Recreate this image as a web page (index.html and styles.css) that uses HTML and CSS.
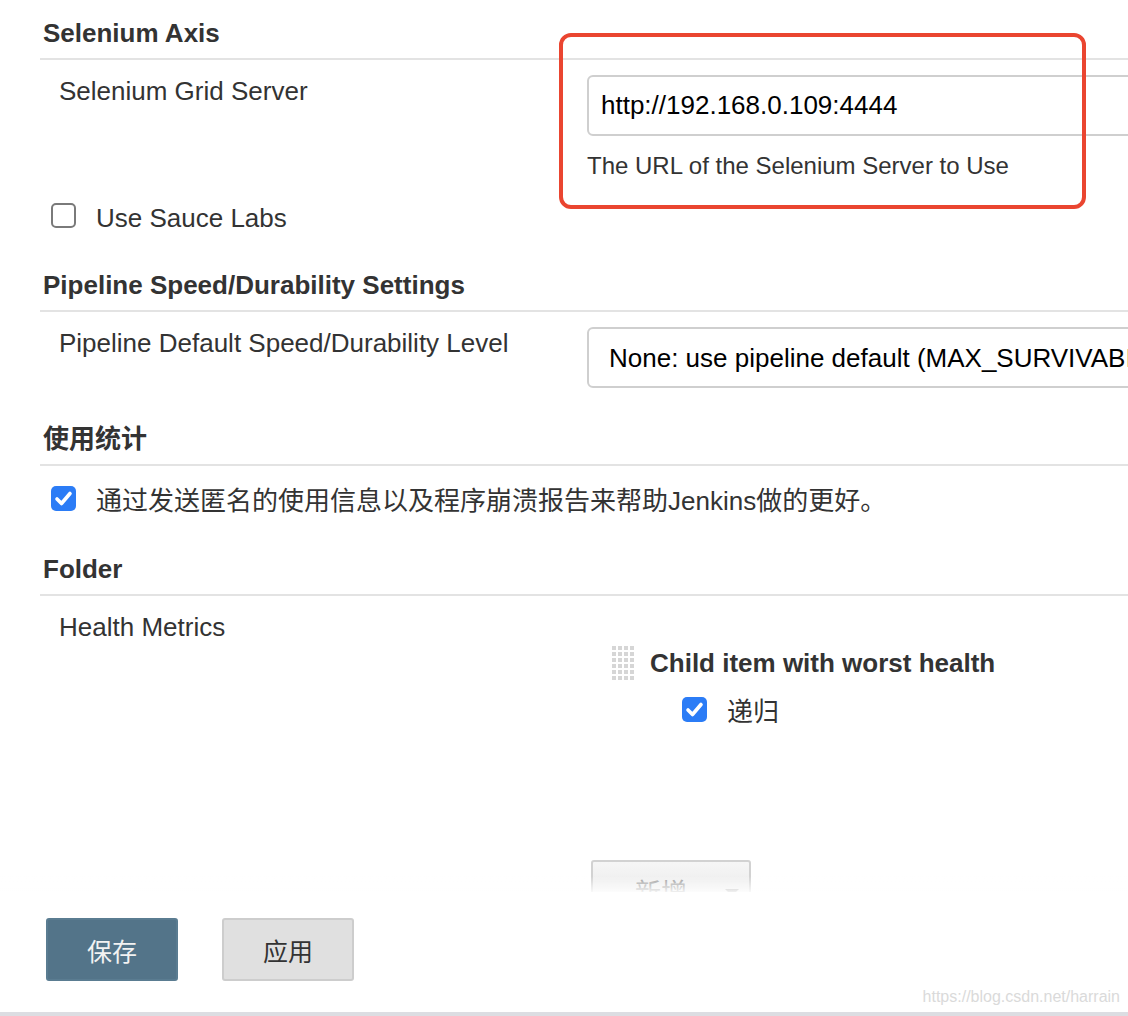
FILE: index.html
```html
<!DOCTYPE html>
<html lang="zh-CN">
<head>
<meta charset="utf-8">
<title>Jenkins 配置</title>
<link rel="stylesheet" href="styles.css">
</head>
<body>
<div class="main">
  <section class="section">
    <h3 class="section-header">Selenium Axis</h3>
    <div class="row">
      <div class="label">Selenium Grid Server</div>
      <div class="field">
        <input class="text-input" type="text" value="http://192.168.0.109:4444">
        <div class="help">The URL of the Selenium Server to Use</div>
        <div class="annotation"></div>
      </div>
    </div>
    <div class="check-row check-row--first">
      <span class="cb"></span>
      <span>Use Sauce Labs</span>
    </div>
  </section>

  <section class="section section--s2">
    <h3 class="section-header">Pipeline Speed/Durability Settings</h3>
    <div class="row">
      <div class="label">Pipeline Default Speed/Durability Level</div>
      <div class="field">
        <select class="select"><option>None: use pipeline default (MAX_SURVIVABILITY)</option></select>
      </div>
    </div>
  </section>

  <section class="section section--s3">
    <h3 class="section-header">使用统计</h3>
    <div class="check-row check-row--stats">
      <span class="cb cb--on"><svg viewBox="0 0 25 25" width="25" height="25"><path d="M6 13 L10.5 17.5 L19 7.5" fill="none" stroke="#fff" stroke-width="3.6" stroke-linecap="round" stroke-linejoin="round"/></svg></span>
      <span>通过发送匿名的使用信息以及程序崩溃报告来帮助Jenkins做的更好。</span>
    </div>
  </section>

  <section class="section section--s4">
    <h3 class="section-header">Folder</h3>
    <div class="row">
      <div class="label">Health Metrics</div>
      <div class="field">
        <div class="repeat-item">
          <svg class="handle" viewBox="0 0 22 36" width="22" height="36">
            <g fill="#d6d6d6">
              <rect x="0" y="0" width="4" height="4"/><rect x="6" y="0" width="4" height="4"/><rect x="12" y="0" width="4" height="4"/><rect x="18" y="0" width="4" height="4"/>
              <rect x="0" y="6" width="4" height="4"/><rect x="6" y="6" width="4" height="4"/><rect x="12" y="6" width="4" height="4"/><rect x="18" y="6" width="4" height="4"/>
              <rect x="0" y="12" width="4" height="4"/><rect x="6" y="12" width="4" height="4"/><rect x="12" y="12" width="4" height="4"/><rect x="18" y="12" width="4" height="4"/>
              <rect x="0" y="18" width="4" height="4"/><rect x="6" y="18" width="4" height="4"/><rect x="12" y="18" width="4" height="4"/><rect x="18" y="18" width="4" height="4"/>
              <rect x="0" y="24" width="4" height="4"/><rect x="6" y="24" width="4" height="4"/><rect x="12" y="24" width="4" height="4"/><rect x="18" y="24" width="4" height="4"/>
              <rect x="0" y="30" width="4" height="4"/><rect x="6" y="30" width="4" height="4"/><rect x="12" y="30" width="4" height="4"/><rect x="18" y="30" width="4" height="4"/>
            </g>
          </svg>
          <div class="repeat-body">
            <div class="repeat-title">Child item with worst health</div>
            <div class="check-row check-row--nested">
              <span class="cb cb--on"><svg viewBox="0 0 25 25" width="25" height="25"><path d="M6 13 L10.5 17.5 L19 7.5" fill="none" stroke="#fff" stroke-width="3.6" stroke-linecap="round" stroke-linejoin="round"/></svg></span>
              <span>递归</span>
            </div>
          </div>
        </div>
        <div class="add-btn"><span class="add-text">新增</span><span class="caret"></span></div>
      </div>
    </div>
  </section>
</div>

<footer class="bottom-sticker">
  <div class="buttons">
    <button class="btn btn--primary">保存</button>
    <button class="btn btn--secondary">应用</button>
  </div>
  <div class="watermark">https://blog.csdn.net/harrain</div>
</footer>
</body>
</html>
```

FILE: styles.css
```css
html, body {
  margin: 0;
  padding: 0;
  background: #fff;
}

body {
  width: 1128px;
  height: 1016px;
  overflow: hidden;
  font-family: "Liberation Sans", Arial, "Noto Sans CJK SC", sans-serif;
  font-size: 26px;
  line-height: 30px;
  color: #333;
}

.main {
  padding: 18px 0 0 40px;
  overflow: hidden;
  height: 1016px;
  box-sizing: border-box;
}

.section-header {
  margin: 0;
  font-size: 26px;
  font-weight: bold;
  line-height: 30px;
  padding: 0 0 10px 3px;
  border-bottom: 2px solid #e3e3e3;
  color: #333;
}

.section--s2 { margin-top: 37px; }
.section--s3 { margin-top: 36px; }
.section--s4 { margin-top: 38px; }

.row {
  display: grid;
  grid-template-columns: 547px minmax(0, 1fr);
  padding-top: 15px;
}

.label {
  padding-left: 19px;
  padding-top: 1px;
  line-height: 30px;
  white-space: nowrap;
}

.field {
  position: relative;
  min-width: 0;
}

.text-input,
.select {
  display: block;
  box-sizing: border-box;
  width: calc(100% + 40px);
  height: 61px;
  margin: 0;
  border: 2px solid #cfcfcf;
  border-radius: 6px;
  background: #fff;
  font-family: "Liberation Sans", Arial, sans-serif;
  font-size: 26px;
  color: #000;
  outline: none;
}

.text-input {
  padding: 0 12px;
}

.select {
  -webkit-appearance: none;
  appearance: none;
  padding: 0 20px;
}

.help {
  margin-top: 15px;
  font-size: 24px;
  line-height: 30px;
  color: #333;
}

.annotation {
  position: absolute;
  left: -28px;
  top: -42px;
  width: 527px;
  height: 176px;
  box-sizing: border-box;
  border: 4px solid #ea4530;
  border-radius: 12px;
  pointer-events: none;
}

.check-row {
  display: flex;
  align-items: flex-start;
  gap: 20px;
  line-height: 30px;
}

.check-row--first { margin-top: 22px; padding-left: 11px; }
.check-row--stats { margin-top: 20px; padding-left: 11px; }
.check-row--nested { margin-top: 19px; padding-left: 32px; }

.cb {
  flex: none;
  display: block;
  box-sizing: border-box;
  width: 25px;
  height: 25px;
  margin-top: 0;
  border: 2px solid #7a7a7a;
  border-radius: 5px;
  background: #fff;
}

.cb--on {
  border: none;
  background: #2b7cf6;
}

.cb svg {
  display: block;
}

.repeat-item {
  display: flex;
  align-items: flex-start;
  gap: 16px;
  margin-top: 35px;
  padding-left: 25px;
}

.handle {
  flex: none;
  display: block;
}

.repeat-title {
  margin-top: 2px;
  font-weight: bold;
  line-height: 30px;
}

.add-btn {
  display: flex;
  align-items: flex-start;
  box-sizing: border-box;
  width: 160px;
  height: 60px;
  margin: 133px 0 0 4px;
  padding: 14px 0 0 42px;
  border: 2px solid #d2d2d2;
  border-radius: 3px;
  background: linear-gradient(#f6f6f6, #e2e2e2);
  color: #9a9a9a;
  font-family: "Noto Sans CJK SC", sans-serif;
  font-size: 26px;
  line-height: 30px;
}

.caret {
  display: block;
  width: 0;
  height: 0;
  margin: 13px 0 0 38px;
  border-left: 7px solid transparent;
  border-right: 7px solid transparent;
  border-top: 7px solid #a0a0a0;
}

.bottom-sticker {
  position: fixed;
  left: 0;
  right: 0;
  bottom: 0;
  height: 124px;
  box-sizing: border-box;
  padding-top: 26px;
  background: #fff;
  border-bottom: 4px solid #dcdde2;
}

.bottom-sticker::before {
  content: "";
  position: absolute;
  left: 0;
  right: 0;
  top: -16px;
  height: 16px;
  background: linear-gradient(rgba(255,255,255,0), rgba(255,255,255,0.85));
}

.buttons {
  display: flex;
  gap: 44px;
  padding-left: 46px;
}

.btn {
  box-sizing: border-box;
  width: 132px;
  height: 63px;
  margin: 0;
  padding: 0;
  border-radius: 3px;
  font-family: "Noto Sans CJK SC", sans-serif;
  font-size: 25px;
  cursor: pointer;
}

.btn--primary {
  background: #537489;
  border: 2px solid #5a7c91;
  color: #f2f2f2;
}

.btn--secondary {
  background: #e0e0e0;
  border: 2px solid #cdcdcd;
  color: #333;
}

.watermark {
  position: absolute;
  right: 8px;
  bottom: 5px;
  font-family: "Liberation Sans", Arial, sans-serif;
  font-size: 16px;
  line-height: 20px;
  color: #dadada;
}
```
